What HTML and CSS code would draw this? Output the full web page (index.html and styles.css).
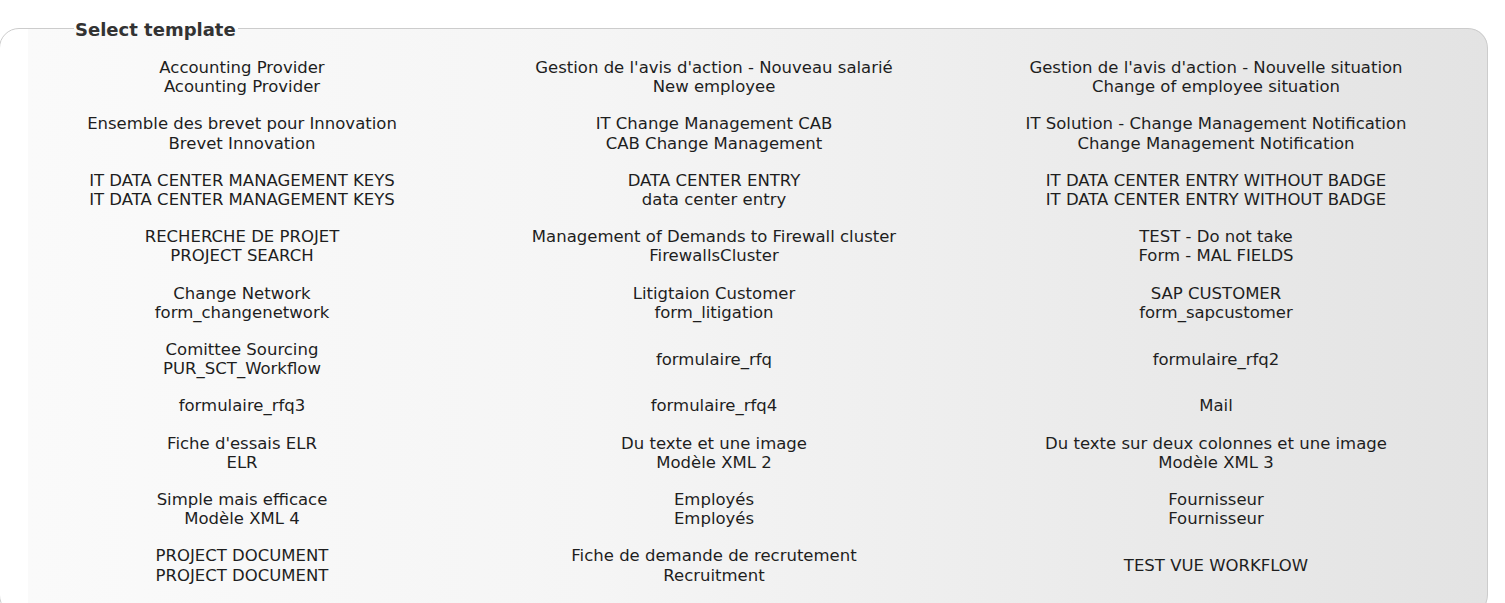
FILE: index.html
```html
<!DOCTYPE html>
<html lang="en">
<head>
<meta charset="utf-8">
<title>Select template</title>
<link rel="stylesheet" href="styles.css">
</head>
<body>
<div class="page">
  <fieldset class="box">
    <legend class="box-title">Select template</legend>
    <div class="templates">
      <div class="tpl">Accounting Provider<br>Acounting Provider</div>
      <div class="tpl">Gestion de l'avis d'action - Nouveau salarié<br>New employee</div>
      <div class="tpl">Gestion de l'avis d'action - Nouvelle situation<br>Change of employee situation</div>

      <div class="tpl">Ensemble des brevet pour Innovation<br>Brevet Innovation</div>
      <div class="tpl">IT Change Management CAB<br>CAB Change Management</div>
      <div class="tpl">IT Solution - Change Management Notification<br>Change Management Notification</div>

      <div class="tpl">IT DATA CENTER MANAGEMENT KEYS<br>IT DATA CENTER MANAGEMENT KEYS</div>
      <div class="tpl">DATA CENTER ENTRY<br>data center entry</div>
      <div class="tpl">IT DATA CENTER ENTRY WITHOUT BADGE<br>IT DATA CENTER ENTRY WITHOUT BADGE</div>

      <div class="tpl">RECHERCHE DE PROJET<br>PROJECT SEARCH</div>
      <div class="tpl">Management of Demands to Firewall cluster<br>FirewallsCluster</div>
      <div class="tpl">TEST - Do not take<br>Form - MAL FIELDS</div>

      <div class="tpl">Change Network<br>form_changenetwork</div>
      <div class="tpl">Litigtaion Customer<br>form_litigation</div>
      <div class="tpl">SAP CUSTOMER<br>form_sapcustomer</div>

      <div class="tpl">Comittee Sourcing<br>PUR_SCT_Workflow</div>
      <div class="tpl">formulaire_rfq</div>
      <div class="tpl">formulaire_rfq2</div>

      <div class="tpl">formulaire_rfq3</div>
      <div class="tpl">formulaire_rfq4</div>
      <div class="tpl">Mail</div>

      <div class="tpl">Fiche d'essais ELR<br>ELR</div>
      <div class="tpl">Du texte et une image<br>Modèle XML 2</div>
      <div class="tpl">Du texte sur deux colonnes et une image<br>Modèle XML 3</div>

      <div class="tpl">Simple mais efficace<br>Modèle XML 4</div>
      <div class="tpl">Employés<br>Employés</div>
      <div class="tpl">Fournisseur<br>Fournisseur</div>

      <div class="tpl">PROJECT DOCUMENT<br>PROJECT DOCUMENT</div>
      <div class="tpl">Fiche de demande de recrutement<br>Recruitment</div>
      <div class="tpl">TEST VUE WORKFLOW</div>
    </div>
  </fieldset>
</div>
</body>
</html>
```

FILE: styles.css
```css
html, body {
  margin: 0;
  padding: 0;
  background: #ffffff;
}

.page {
  padding-top: 15px;
  width: 1488px;
}

.box {
  margin: 0 0 0 -1px;
  padding: 0 0 20px 0;
  border: 1px solid #cccccc;
  border-radius: 20px;
  min-inline-size: 0;
  background: linear-gradient(to right, #ffffff 0, #ffffff 28px, #fafafa 28px, #f5f5f5 40%, #ececec 70%, #e3e3e3 100%);
}

.box-title {
  margin-left: 74px;
  padding: 4px 2px 0 1px;
  font-family: "DejaVu Sans", Verdana, sans-serif;
  font-weight: bold;
  font-size: 18px;
  line-height: 22px;
  color: #333333;
}

.templates {
  margin-top: 8px;
  margin-left: 28px;
  display: grid;
  grid-template-columns: 428px 516px 488px;
  align-items: center;
  font-family: "DejaVu Sans", Verdana, sans-serif;
  font-size: 16.5px;
  line-height: 19.2px;
  color: #1e1e1e;
}

.tpl {
  text-align: center;
  padding: 9px 0 9px 0;
}
```
